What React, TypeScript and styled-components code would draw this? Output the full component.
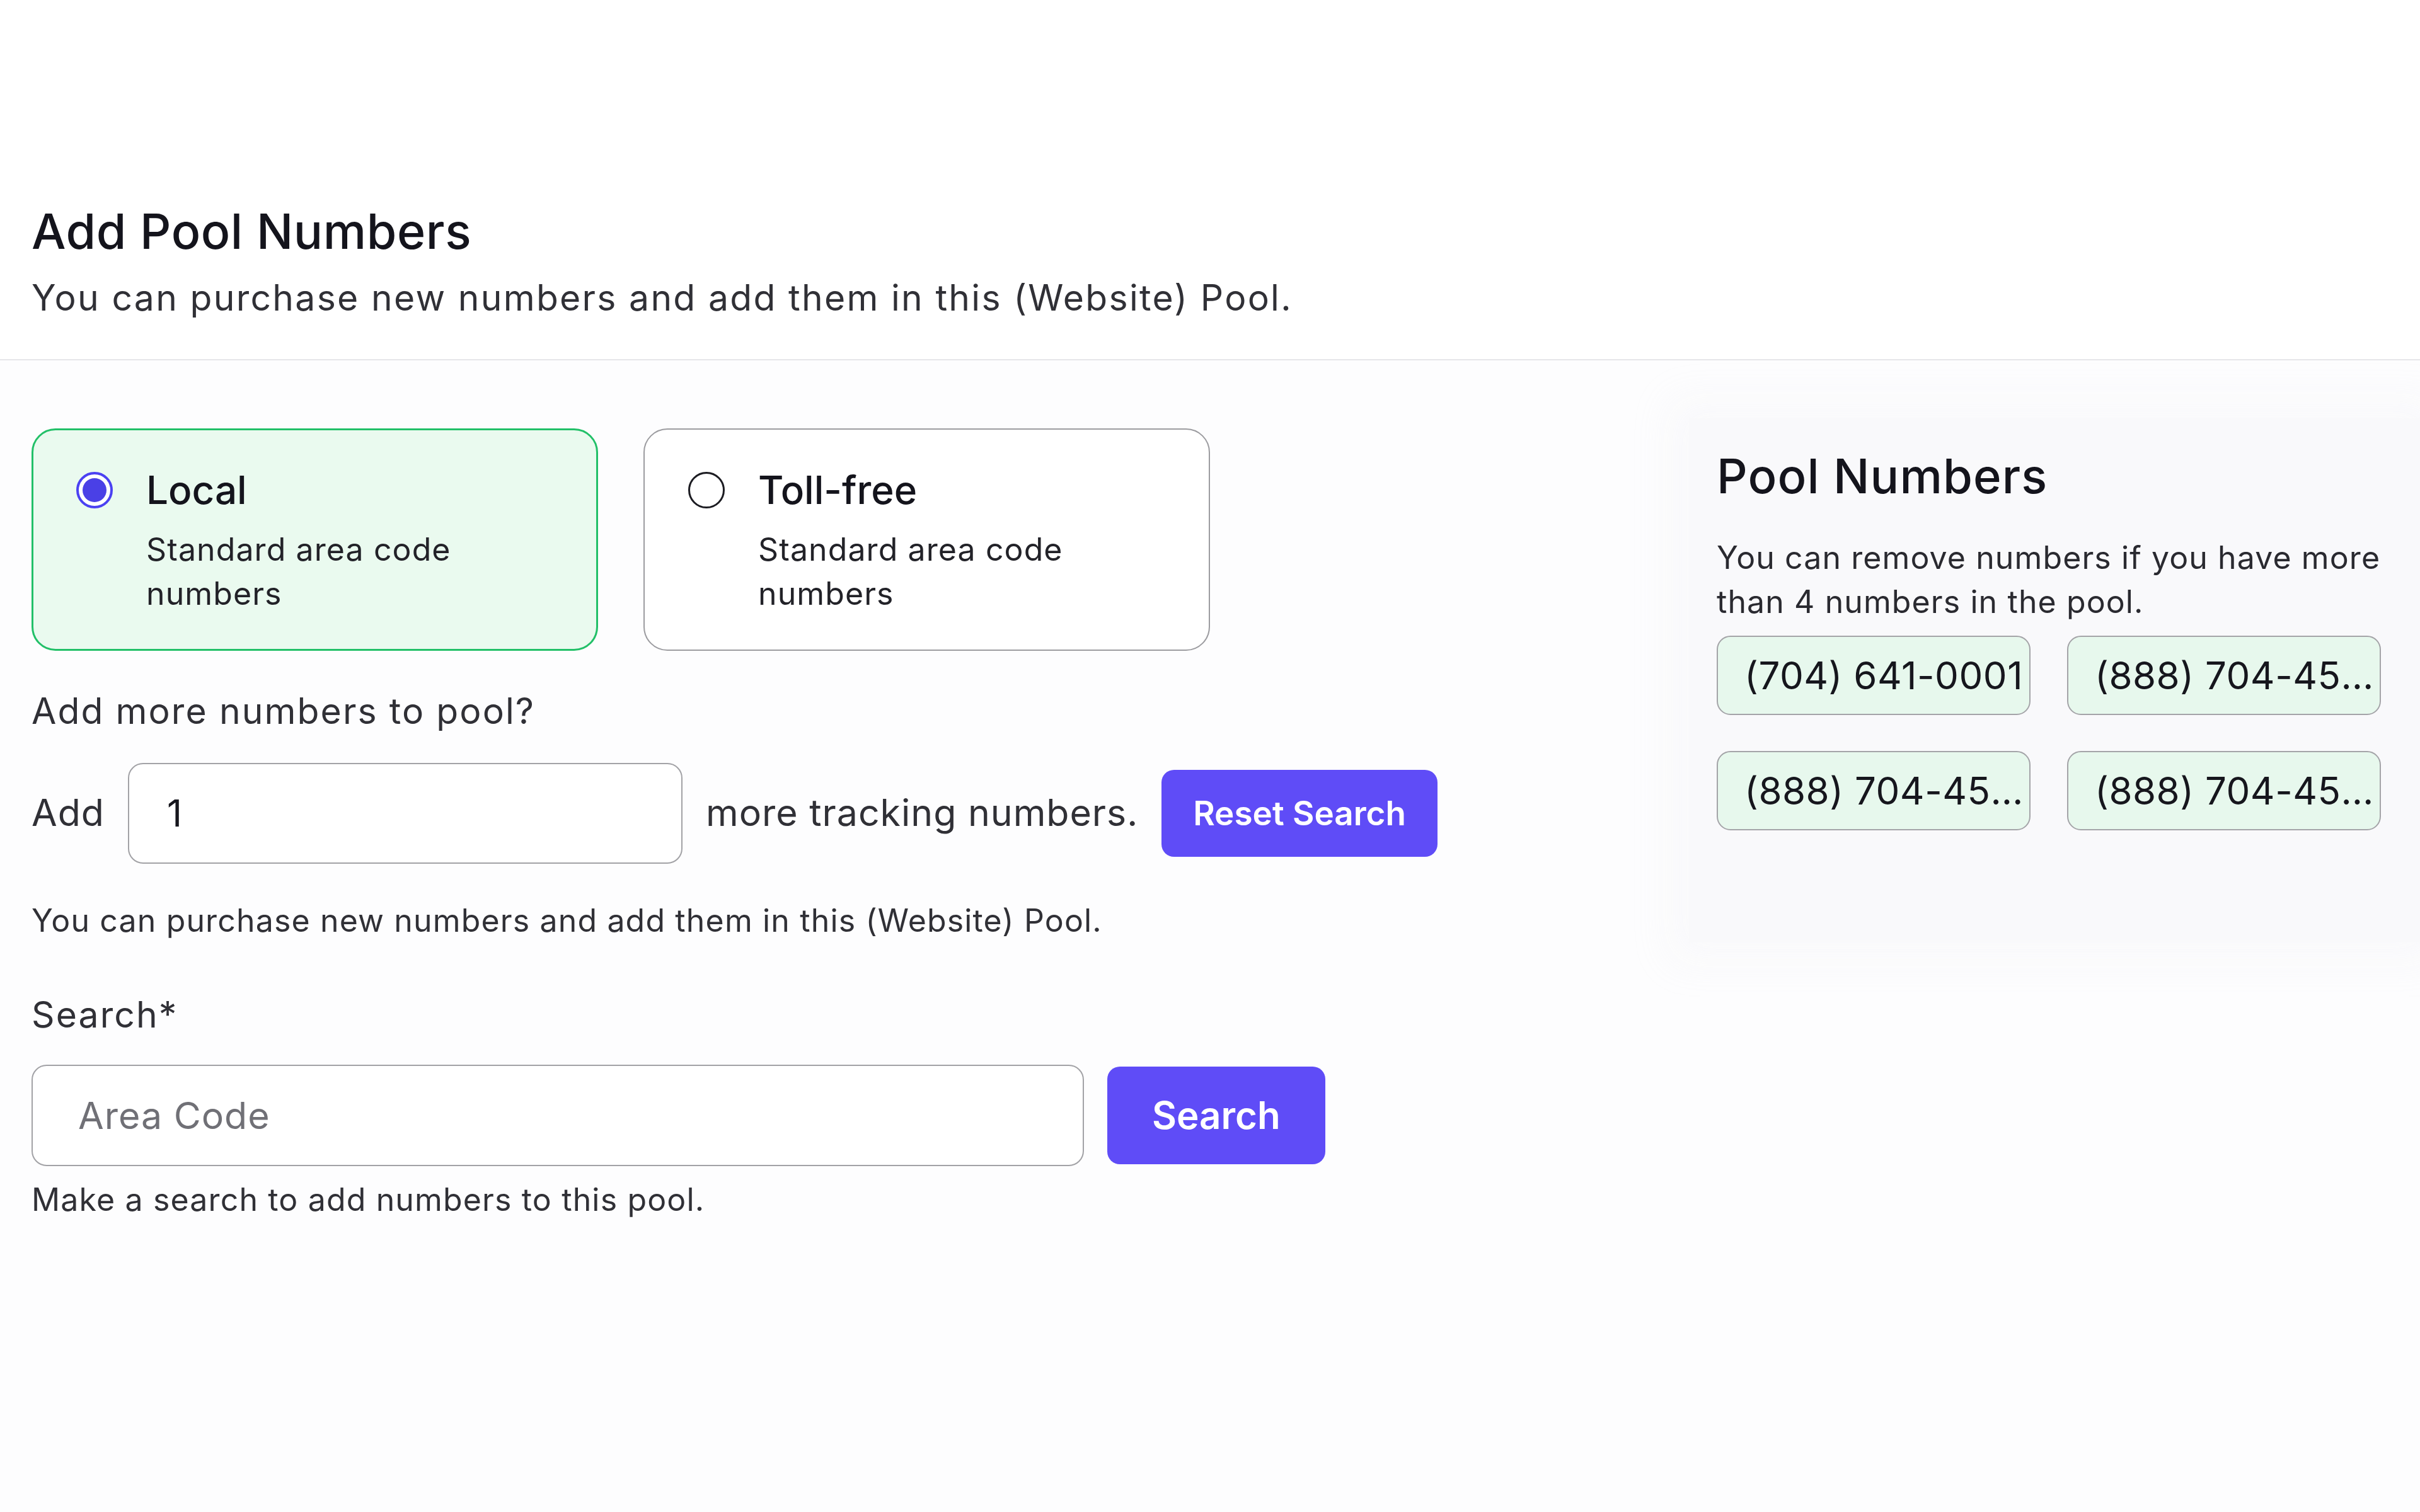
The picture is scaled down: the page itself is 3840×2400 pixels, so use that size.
import React from "react";
import styled, { createGlobalStyle } from "styled-components";

const Global = createGlobalStyle`
  html, body { margin: 0; padding: 0; background: #ffffff; }
  body { font-family: Inter, "Noto Sans", sans-serif; color: #16161d; }
  * { box-sizing: border-box; }
`;

const Page = styled.div`
  min-height: 2400px;
  display: flex;
  flex-direction: column;
  background: #ffffff;
`;

const Header = styled.header`
  padding: 321px 50px 62px;
  border-bottom: 2px solid #e6e6e9;
  background: #ffffff;
`;

const Title = styled.h1`
  margin: 0;
  font-size: 77px;
  line-height: 1.2;
  font-weight: 500;
  letter-spacing: 0.6px;
  color: #14141c;
`;

const Subtitle = styled.p`
  margin: 26px 0 0;
  font-size: 57px;
  line-height: 1.2;
  letter-spacing: 2.3px;
  color: #303036;
`;

const Main = styled.main`
  flex: 1;
  display: flex;
  background: #fdfdfe;
`;

const LeftColumn = styled.section`
  flex: 1;
  padding: 108px 0 0 50px;
`;

const CardRow = styled.div`
  display: flex;
  gap: 72px;
`;

const Card = styled.label<{ $selected?: boolean }>`
  width: 899px;
  border-radius: 38px;
  border: ${(p) => (p.$selected ? "3px solid #22c068" : "2px solid #9c9ca0")};
  background: ${(p) => (p.$selected ? "#eafaef" : "#ffffff")};
  padding: ${(p) => (p.$selected ? "58px 40px 53px 68px" : "59px 40px 54px 69px")};
  cursor: pointer;
`;

const CardHead = styled.div`
  display: flex;
  align-items: center;
  gap: 53px;
`;

const Radio = styled.span<{ $checked?: boolean }>`
  width: 58px;
  height: 58px;
  flex: none;
  border-radius: 50%;
  border: ${(p) => (p.$checked ? "4px solid #4b41f2" : "3px solid #1c1c22")};
  display: flex;
  align-items: center;
  justify-content: center;
  background: #ffffff;
  &::after {
    content: "";
    width: 38px;
    height: 38px;
    border-radius: 50%;
    background: ${(p) => (p.$checked ? "#4a40e6" : "transparent")};
  }
`;

const CardTitle = styled.span`
  font-size: 62px;
  line-height: 1.2;
  font-weight: 500;
  color: #14141c;
`;

const CardDesc = styled.p`
  margin: 22px 0 0 111px;
  font-size: 50px;
  line-height: 70px;
  letter-spacing: 1.1px;
  color: #222228;
`;

const Question = styled.p`
  margin: 62px 0 0;
  font-size: 57px;
  line-height: 1.2;
  letter-spacing: 2.1px;
  color: #303036;
`;

const AddRow = styled.div`
  margin-top: 47px;
  display: flex;
  align-items: center;
  gap: 37px;
`;

const InlineText = styled.span`
  font-size: 59px;
  line-height: 1.2;
  letter-spacing: 1px;
  color: #303036;
`;

const TextInput = styled.input<{ $width: number; $height: number; $pad: number }>`
  width: ${(p) => p.$width}px;
  height: ${(p) => p.$height}px;
  border: 2px solid #a2a2a6;
  border-radius: 24px;
  background: #ffffff;
  padding: 0 ${(p) => p.$pad}px;
  font-family: Inter, "Noto Sans", sans-serif;
  font-size: 59px;
  letter-spacing: 1px;
  color: #16161d;
  outline: none;
  &::placeholder {
    color: #707076;
  }
`;

const Button = styled.button<{ $height: number; $size: number; $pad: number }>`
  height: ${(p) => p.$height}px;
  padding: 0 ${(p) => p.$pad}px;
  border: none;
  border-radius: 20px;
  background: #5f4cf7;
  color: #ffffff;
  font-family: Inter, "Noto Sans", sans-serif;
  font-size: ${(p) => p.$size}px;
  font-weight: 600;
  cursor: pointer;
`;

const Helper = styled.p<{ $top: number }>`
  margin: ${(p) => p.$top}px 0 0;
  font-size: 50px;
  line-height: 1.2;
  letter-spacing: 1.15px;
  color: #303036;
`;

const FieldLabel = styled.p`
  margin: 86px 0 0;
  font-size: 57px;
  line-height: 1.2;
  letter-spacing: 2.1px;
  color: #303036;
`;

const SearchRow = styled.div`
  margin-top: 45px;
  display: flex;
  align-items: center;
  gap: 37px;
`;

const Panel = styled.aside`
  width: 1160px;
  align-self: flex-start;
  margin-top: 92px;
  padding: 46px 62px 178px 44px;
  background: #f9f9fb;
  box-shadow: 0 0 60px 30px rgba(248, 248, 251, 0.9);
`;

const PanelTitle = styled.h2`
  margin: 0;
  font-size: 76px;
  line-height: 1.2;
  font-weight: 500;
  letter-spacing: 1.1px;
  color: #14141c;
`;

const PanelDesc = styled.p`
  margin: 49px 0 0;
  font-size: 50px;
  line-height: 70px;
  letter-spacing: 1.1px;
  color: #2a2a30;
`;

const ChipGrid = styled.div`
  margin-top: 19px;
  display: grid;
  grid-template-columns: 498px 498px;
  column-gap: 58px;
  row-gap: 57px;
`;

const Chip = styled.div`
  height: 126px;
  border: 2px solid #a4a4a8;
  border-radius: 22px;
  background: #e7f8ed;
  padding: 0 4px 0 42px;
  display: flex;
  align-items: center;
  font-size: 60px;
  letter-spacing: 0.5px;
  color: #16161d;
  overflow: hidden;
`;

const ChipText = styled.span`
  white-space: nowrap;
  overflow: hidden;
  text-overflow: ellipsis;
`;

const numbers = ["(704) 641-0001", "(888) 704-4500", "(888) 704-4501", "(888) 704-4502"];

export default function App() {
  return (
    <Page>
      <Global />
      <Header>
        <Title>Add Pool Numbers</Title>
        <Subtitle>You can purchase new numbers and add them in this (Website) Pool.</Subtitle>
      </Header>
      <Main>
        <LeftColumn>
          <CardRow>
            <Card $selected>
              <CardHead>
                <Radio $checked />
                <CardTitle>Local</CardTitle>
              </CardHead>
              <CardDesc>Standard area code numbers</CardDesc>
            </Card>
            <Card>
              <CardHead>
                <Radio />
                <CardTitle>Toll-free</CardTitle>
              </CardHead>
              <CardDesc>Standard area code numbers</CardDesc>
            </Card>
          </CardRow>
          <Question>Add more numbers to pool?</Question>
          <AddRow>
            <InlineText>Add</InlineText>
            <TextInput $width={880} $height={160} $pad={60} defaultValue="1" />
            <InlineText>more tracking numbers.</InlineText>
            <Button $height={138} $size={53} $pad={50}>Reset Search</Button>
          </AddRow>
          <Helper $top={60}>You can purchase new numbers and add them in this (Website) Pool.</Helper>
          <FieldLabel>Search*</FieldLabel>
          <SearchRow>
            <TextInput $width={1670} $height={161} $pad={72} placeholder="Area Code" />
            <Button $height={155} $size={60} $pad={71}>Search</Button>
          </SearchRow>
          <Helper $top={23}>Make a search to add numbers to this pool.</Helper>
        </LeftColumn>
        <Panel>
          <PanelTitle>Pool Numbers</PanelTitle>
          <PanelDesc>You can remove numbers if you have more than 4 numbers in the pool.</PanelDesc>
          <ChipGrid>
            {numbers.map((n) => (
              <Chip key={n}>
                <ChipText>{n}</ChipText>
              </Chip>
            ))}
          </ChipGrid>
        </Panel>
      </Main>
    </Page>
  );
}
